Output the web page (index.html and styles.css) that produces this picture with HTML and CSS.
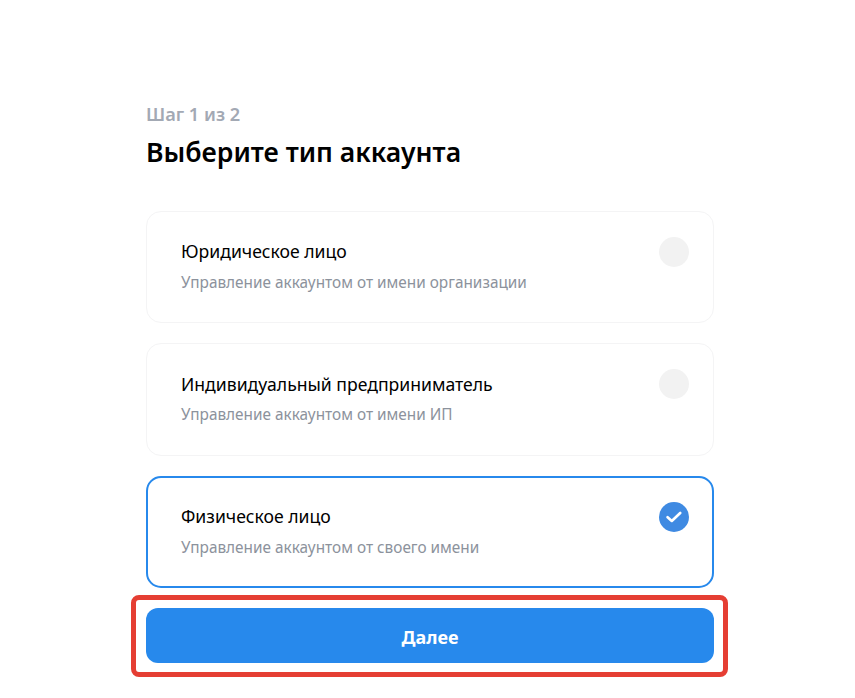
FILE: index.html
```html
<!DOCTYPE html>
<html lang="en">
<head>
    <meta charset="UTF-8">
    <title>Выберите тип аккаунта</title>
    <link rel="stylesheet" href="styles.css">
</head>
<body>
  <div class="container">
    <div class="step">Шаг 1 из 2</div>
    <h2>Выберите тип аккаунта</h2>

    <div class="type-list">
        <div class="type-card">
            <div class="type-text">
                <div class="type-name">Юридическое лицо</div>
                <div class="type-desc">Управление аккаунтом от имени организации</div>
            </div>
            <span class="radio"></span>
        </div>
        <div class="type-card card-tall">
            <div class="type-text">
                <div class="type-name">Индивидуальный предприниматель</div>
                <div class="type-desc">Управление аккаунтом от имени ИП</div>
            </div>
            <span class="radio"></span>
        </div>
        <div class="type-card selected">
            <div class="type-text">
                <div class="type-name">Физическое лицо</div>
                <div class="type-desc">Управление аккаунтом от своего имени</div>
            </div>
            <span class="radio checked">
                <svg width="16" height="12" viewBox="0 0 16 12"><path d="M1.6 6.2 L5.8 10 L14.2 2" fill="none" stroke="#fff" stroke-width="2.6" stroke-linecap="round" stroke-linejoin="round"/></svg>
            </span>
        </div>
    </div>

    <div class="next-wrap">
        <button class="next-btn">Далее</button>
    </div>
  </div>
</body>
</html>
```
FILE: styles.css
```css
body {
    font-family: "Noto Sans", "Open Sans", sans-serif;
    background-color: white;
    padding: 0;
    margin: 0;
}
.container {
    width: 568px;
    margin-left: 146px;
    padding-top: 102px;
}
.step {
    font-size: 18.2px;
    line-height: 25px;
    font-weight: 600;
    color: #a3a9b4;
}
h2 {
    margin: 6px 0 0;
    font-size: 26.6px;
    line-height: 38px;
    font-weight: 600;
    color: #000;
}
.type-list {
    margin-top: 40px;
    display: flex;
    flex-direction: column;
    gap: 20px;
}
.type-card {
    box-sizing: border-box;
    height: 112px;
    padding: 25px 24px 0 34px;
    display: flex;
    justify-content: space-between;
    align-items: flex-start;
    border: 1px solid #f4f4f5;
    border-radius: 15px;
}
.card-tall {
    height: 113px;
}
.type-card.selected {
    border: 2px solid #2789ec;
    padding: 24px 23px 0 33px;
}
.type-name {
    margin-top: -1px;
    font-size: 17.6px;
    line-height: 30px;
    color: #000;
}
.card-tall .type-name {
    margin-top: 0;
}
.type-desc {
    margin-top: 1px;
    font-size: 15.35px;
    line-height: 30px;
    color: #8c929c;
}
.card-tall .type-desc {
    margin-top: 0;
}
.radio {
    width: 30px;
    height: 30px;
    border-radius: 50%;
    background-color: #f2f2f2;
    display: flex;
    justify-content: center;
    align-items: center;
}
.radio.checked {
    background-color: #3f8ae2;
}
.next-wrap {
    width: 597px;
    box-sizing: border-box;
    margin: 7px 0 0 -15px;
    padding: 8px 9px 9px 10px;
    border: 5px solid #e53e33;
    border-radius: 8px;
}
.next-btn {
    display: block;
    width: 100%;
    height: 55px;
    padding: 2px 0 0;
    border: none;
    border-radius: 12px;
    background-color: #2789ec;
    color: white;
    font-family: inherit;
    font-size: 18px;
    font-weight: 700;
}
```
